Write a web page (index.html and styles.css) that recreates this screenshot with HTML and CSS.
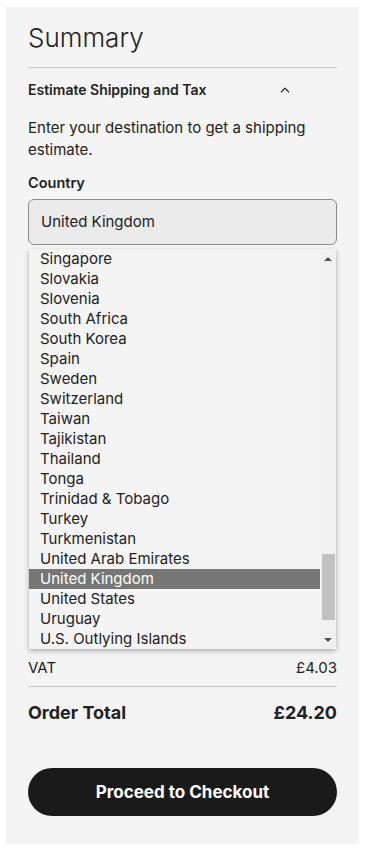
FILE: index.html
```html
<!DOCTYPE html>
<html lang="en">
<head>
  <meta charset="UTF-8" />
  <meta name="viewport" content="width=device-width, initial-scale=1.0" />
  <title>Summary</title>
  <link rel="stylesheet" href="styles.css">
</head>
<body>
  <div class="summary">
    <h1 class="summary-title">Summary</h1>

    <div class="estimate">
      <button class="estimate-toggle" type="button">
        <span>Estimate Shipping and Tax</span>
        <svg class="chevron" width="10" height="6" viewBox="0 0 10 6"><path d="M1 5.2 5 1.2 9 5.2" fill="none" stroke="#333" stroke-width="1.3"/></svg>
      </button>

      <p class="estimate-text">Enter your destination to get a shipping estimate.</p>

      <label class="field-label">Country</label>
      <div class="select-box">United Kingdom</div>

      <!-- open list of the country select -->
      <div class="dropdown">
        <ul class="options">
          <li>Singapore</li>
          <li>Slovakia</li>
          <li>Slovenia</li>
          <li>South Africa</li>
          <li>South Korea</li>
          <li>Spain</li>
          <li>Sweden</li>
          <li>Switzerland</li>
          <li>Taiwan</li>
          <li>Tajikistan</li>
          <li>Thailand</li>
          <li>Tonga</li>
          <li>Trinidad &amp; Tobago</li>
          <li>Turkey</li>
          <li>Turkmenistan</li>
          <li>United Arab Emirates</li>
          <li class="selected">United Kingdom</li>
          <li>United States</li>
          <li>Uruguay</li>
          <li>U.S. Outlying Islands</li>
        </ul>
        <div class="scrollbar">
          <span class="arrow up"></span>
          <span class="thumb"></span>
          <span class="arrow down"></span>
        </div>
      </div>
    </div>

    <div class="totals">
      <div class="row"><span>VAT</span><span>£4.03</span></div>
      <div class="row total"><span>Order Total</span><span>£24.20</span></div>
    </div>

    <button class="checkout" type="button">Proceed to Checkout</button>
  </div>
</body>
</html>
```

FILE: styles.css
```css
body {
  margin: 0;
  padding: 7px 8px 8px 6px;
  background: #fff;
  font-family: Inter, "Noto Sans", Arial, sans-serif;
  color: #222;
}

.summary {
  background: #f4f4f4;
  padding: 16px 22px 27px;
  height: 837px;
  box-sizing: border-box;
}

.summary-title {
  font-size: 26px;
  font-weight: 300;
  line-height: 30px;
  margin: 0;
  padding-bottom: 14px;
  border-bottom: 1px solid #c8c8c8;
  color: #222;
}

.estimate-toggle {
  display: flex;
  align-items: center;
  width: 100%;
  height: 49px;
  padding: 0 0 6px;
  border: none;
  background: none;
  font-family: inherit;
  font-size: 14px;
  font-weight: 600;
  color: #222;
  text-align: left;
}

.chevron {
  margin-left: 74px;
}

.estimate-text {
  font-size: 15px;
  line-height: 22px;
  margin: 0 0 12px;
  color: #222;
}

.field-label {
  display: block;
  font-size: 14.5px;
  font-weight: 600;
  line-height: 20px;
  margin-bottom: 6px;
}

.select-box {
  height: 46px;
  box-sizing: border-box;
  border: 1.5px solid #8a8a8a;
  border-radius: 6px;
  background: #ebebeb;
  padding: 0 12px;
  font-size: 15px;
  line-height: 43px;
  color: #222;
}

.dropdown {
  display: flex;
  margin: 4px 1px 9px;
  background: #f4f4f4;
  box-shadow: 0 2px 5px rgba(0, 0, 0, 0.3);
}

.options {
  flex: 1;
  list-style: none;
  margin: 0;
  padding: 0;
}

.options li {
  height: 20px;
  line-height: 20px;
  padding-left: 11px;
  font-size: 15px;
  color: #222;
}

.options .selected {
  background: #767676;
  color: #fff;
}

.scrollbar {
  width: 16px;
  background: #f1f1f1;
  position: relative;
}

.arrow {
  width: 0;
  height: 0;
  border-left: 4px solid transparent;
  border-right: 4px solid transparent;
  position: absolute;
  left: 4px;
}

.arrow.up {
  top: 8px;
  border-bottom: 4px solid #505050;
}

.arrow.down {
  bottom: 7px;
  border-top: 4px solid #505050;
}

.thumb {
  position: absolute;
  left: 2px;
  right: 1px;
  top: 305px;
  height: 66px;
  background: #c1c1c1;
}

.row {
  display: flex;
  justify-content: space-between;
  font-size: 15px;
  line-height: 20px;
  padding-bottom: 8px;
}

.row.total {
  border-top: 1px solid #c8c8c8;
  padding: 15px 0 0;
  font-size: 18px;
  font-weight: 650;
  line-height: 22px;
}

.checkout {
  display: block;
  width: 100%;
  height: 48px;
  margin-top: 44px;
  border: none;
  border-radius: 25px;
  background: #1a1a1a;
  color: #fff;
  font-family: inherit;
  font-size: 17px;
  font-weight: 700;
}
```
